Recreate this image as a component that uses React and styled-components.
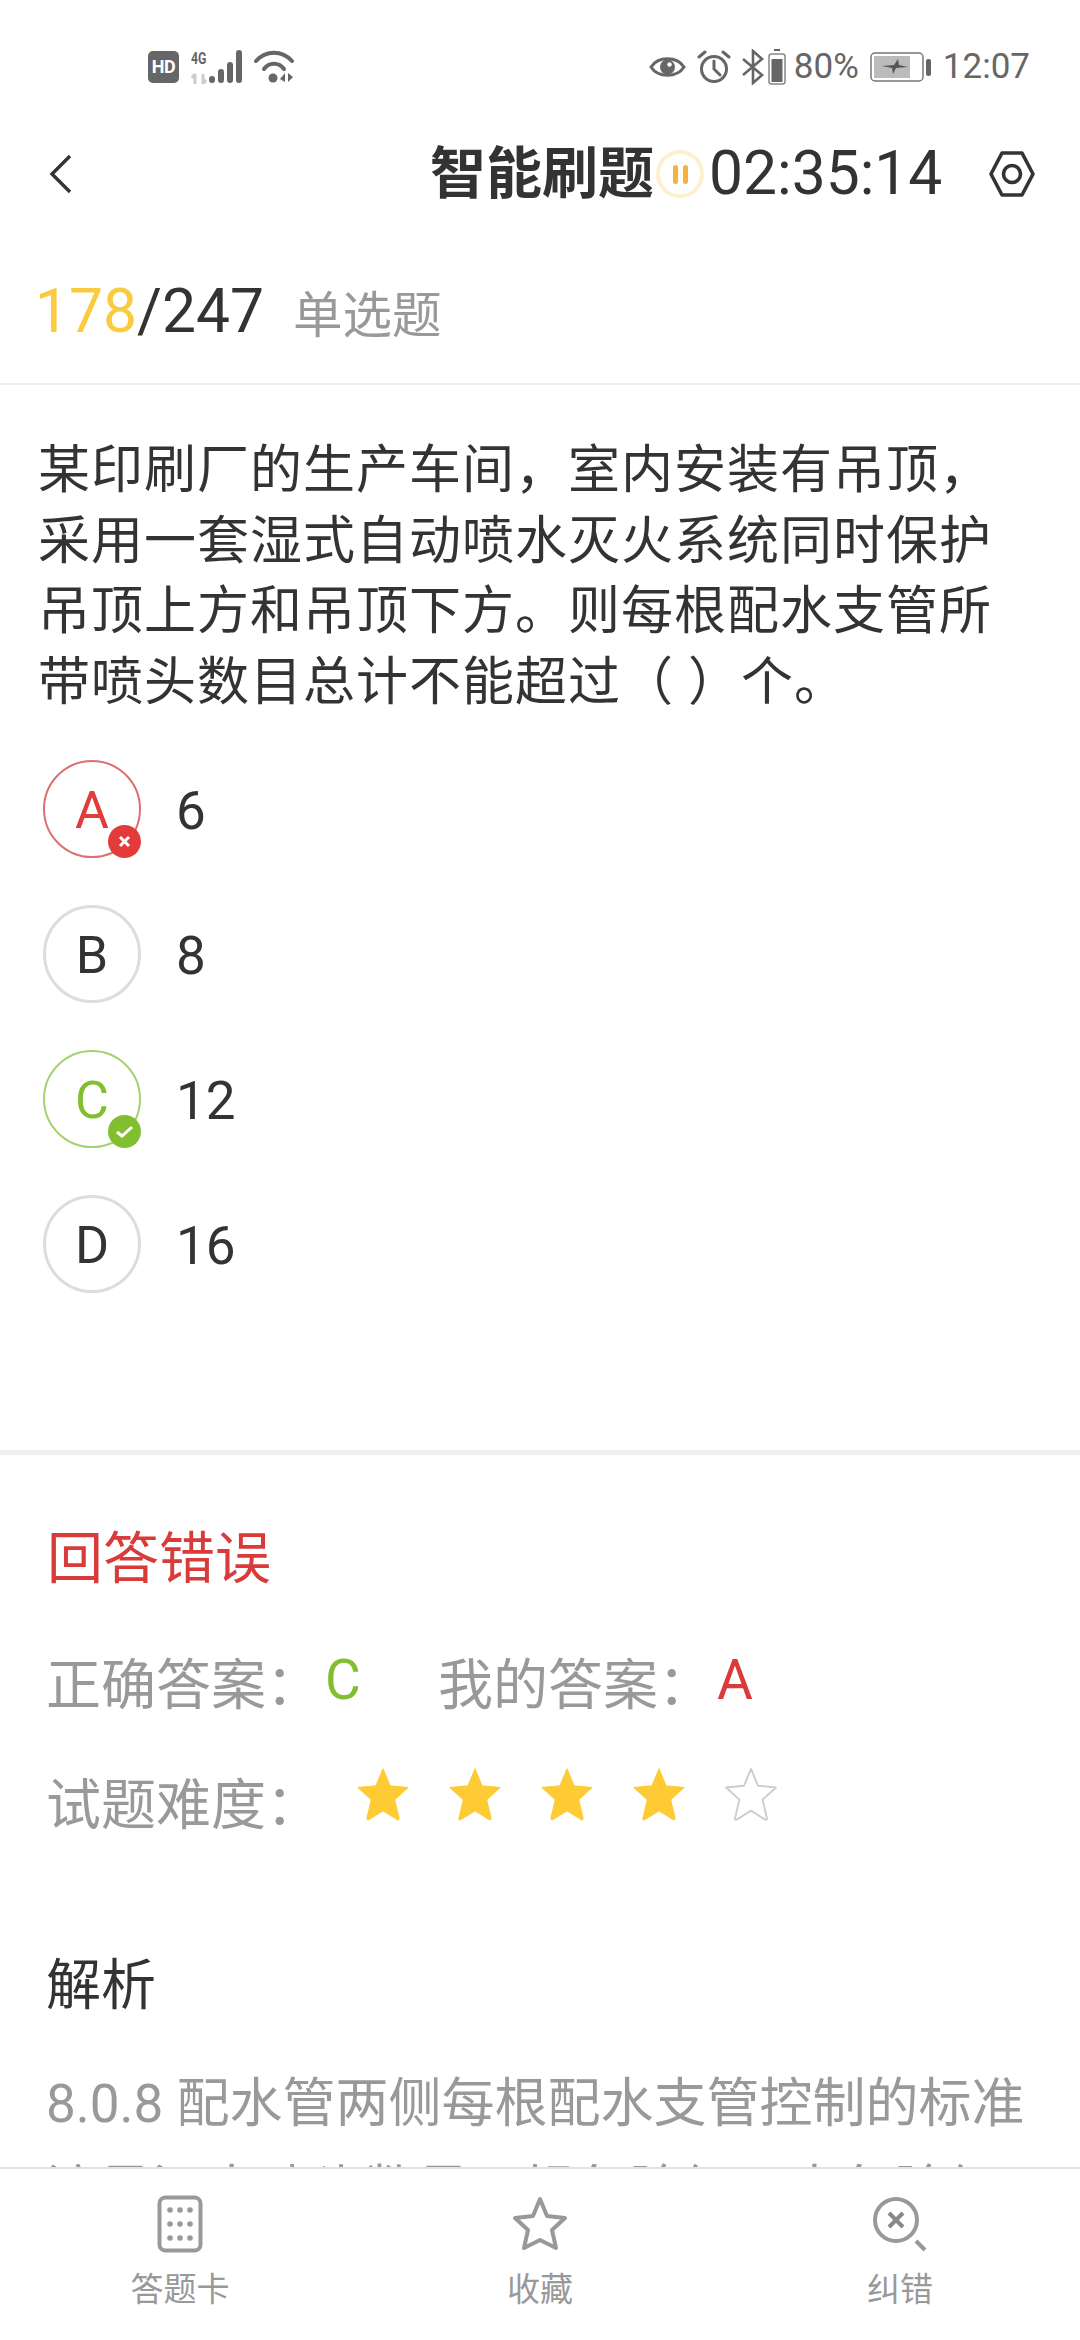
import React from "react";
import styled, { createGlobalStyle } from "styled-components";

const GlobalStyle = createGlobalStyle`
  html, body {
    margin: 0;
    padding: 0;
    background: #fff;
  }
  body {
    font-family: Roboto, "Noto Sans CJK SC", sans-serif;
  }
`;

const Page = styled.div`
  width: 1080px;
  height: 2340px;
  display: flex;
  flex-direction: column;
  overflow: hidden;
  background: #fff;
  color: #333;
`;

// Status bar
const StatusBar = styled.div`
  height: 134px;
  flex: none;
  display: flex;
  align-items: center;
  justify-content: space-between;
  padding: 0 50px 0 148px;
  box-sizing: border-box;
  color: #666;
`;

const StatusGroup = styled.div`
  display: flex;
  align-items: center;
`;

const StatusIcon = styled.svg`
  flex: none;
  margin-left: ${(p) => p.$left || 0}px;
`;

const HdBadge = styled.div`
  width: 31px;
  height: 32px;
  border-radius: 5px;
  background: #666;
  color: #fff;
  font: 700 18px/32px Roboto, sans-serif;
  text-align: center;
  letter-spacing: -0.5px;
`;

const SignalBox = styled.div`
  display: flex;
  flex-direction: column;
  width: 19px;
  margin-left: 12px;
`;

const SignalLabel = styled.span`
  font: 700 17px/15px Roboto, sans-serif;
  color: #666;
  transform: scaleX(0.72);
  transform-origin: left;
`;

const SignalArrows = styled.svg`
  margin-top: 7px;
`;

const StatusText = styled.span`
  font: 400 35px/40px Roboto, sans-serif;
  color: #666;
  margin-left: ${(p) => p.$left || 0}px;
`;

// Nav
const NavBar = styled.div`
  height: 80px;
  flex: none;
  display: flex;
  align-items: center;
  padding: 0 0 0 47px;
`;

const BackButton = styled.div`
  width: 26px;
  height: 44px;
  margin-right: 357px;
`;

const NavTitle = styled.div`
  font-size: 56px;
  font-weight: 700;
  line-height: 80px;
  color: #333;
  width: 224px;
  white-space: nowrap;
`;

const PauseButton = styled.div`
  width: 48px;
  height: 48px;
  box-sizing: border-box;
  border: 4px solid #fdf0cf;
  border-radius: 50%;
  display: flex;
  align-items: center;
  justify-content: center;
  gap: 5px;
  margin-left: 2px;
`;

const PauseBar = styled.span`
  width: 5px;
  height: 19px;
  border-radius: 3px;
  background: #f3b33d;
`;

const Timer = styled.div`
  font-size: 60.5px;
  font-weight: 400;
  line-height: 80px;
  color: #333;
  margin-left: 5px;
`;

const SettingsButton = styled.div`
  width: 48px;
  height: 50px;
  margin-left: 46px;
`;

// Header of question
const QuestionHead = styled.div`
  height: 171px;
  flex: none;
  box-sizing: border-box;
  padding: 26px 0 0 35px;
  border-bottom: 2px solid #eee;
  display: flex;
  align-items: center;
`;

const Count = styled.span`
  font-size: 60.5px;
  color: #333;
`;

const CountNow = styled.span`
  color: #fbcb3f;
`;

const QuestionType = styled.span`
  font-size: 49.5px;
  color: #999;
  margin-left: 29px;
`;

const Stem = styled.div`
  font-size: 52px;
  letter-spacing: 1px;
  line-height: 70.5px;
  color: #333;
  padding: 51px 60px 0 38px;
`;

const OptionList = styled.div`
  display: flex;
  flex-direction: column;
  gap: 47px;
  padding: 42px 0 0 43px;
`;

const OptionRow = styled.div`
  display: flex;
  align-items: center;
`;

const stateColor = { wrong: "#e33a3a", right: "#82bf30" };

const OptionCircle = styled.div`
  position: relative;
  width: 98px;
  height: 98px;
  box-sizing: border-box;
  padding-top: 2px;
  border-radius: 50%;
  border: ${(p) =>
    p.$state ? `2px solid ${p.$state === "wrong" ? "#dc7070" : "#a4d26e"}` : "3px solid #ddd"};
  display: flex;
  align-items: center;
  justify-content: center;
  font-size: 52px;
  color: ${(p) => stateColor[p.$state] || "#333"};
`;

const Badge = styled.span`
  position: absolute;
  right: -2px;
  bottom: -2px;
  width: 33px;
  height: 33px;
  border-radius: 50%;
  background: ${(p) => stateColor[p.$state]};
  display: flex;
  align-items: center;
  justify-content: center;
`;

const OptionText = styled.span`
  font-size: 53px;
  color: #333;
  margin-left: 35px;
  padding-top: 3px;
`;

const Divider = styled.div`
  height: 5px;
  flex: none;
  background: #eee;
  margin-top: 157px;
`;

// Result
const Result = styled.div`
  padding: 0 0 0 46px;
`;

const ResultTitle = styled.div`
  font-size: 56px;
  line-height: 80px;
  color: #d93a3a;
  margin: 64px 0 0 1px;
`;

const ResultRow = styled.div`
  display: flex;
  align-items: center;
  height: 80px;
  margin-top: ${(p) => p.$top || 0}px;
  font-size: 55px;
  color: #999;
`;

const RowLabel = styled.span`
  width: ${(p) => p.$width}px;
  white-space: nowrap;
`;

const AnswerLetter = styled.span`
  color: ${(p) => p.$color};
  width: ${(p) => p.$width}px;
`;

const Stars = styled.div`
  display: flex;
  gap: 34px;
  margin-left: 10px;
  margin-top: -11px;
`;

const StarIcon = styled.svg`
  display: block;
  flex: none;
`;

const SectionTitle = styled.div`
  font-size: 55px;
  line-height: 80px;
  color: #333;
  margin-top: 105px;
`;

const Analysis = styled.div`
  flex: 1;
  min-height: 0;
  overflow: hidden;
  font-size: 53px;
  line-height: 87px;
  color: #999;
  margin-top: 36px;
  padding: 0 36px 0 46px;
`;

// Tabs
const TabBar = styled.div`
  height: 173px;
  flex: none;
  box-sizing: border-box;
  border-top: 2px solid #e2e2e2;
  display: grid;
  grid-template-columns: 360px 360px 360px;
  background: #fff;
`;

const Tab = styled.div`
  display: flex;
  flex-direction: column;
  align-items: center;
  padding-top: 26px;
  color: #999;
  font-size: 33px;
  line-height: 40px;
`;

const TabIcon = styled.div`
  height: 58px;
  margin-bottom: 17px;
`;

function Star({ filled }) {
  const d = "M25 2.5 L31 17 L46.5 18.5 L35 29 L38.8 45 Q39 47 37 46 L25 38.5 L13 46 Q11 47 11.2 45 L15 29 L3.5 18.5 L19 17 Z";
  return (
    <StarIcon width="58" height="58" viewBox="0 0 50 50">
      <path
        d={d}
        fill={filled ? "#fecb35" : "#fff"}
        stroke={filled ? "#fecb35" : "#ccc"}
        strokeWidth={filled ? 1 : 1.6}
        strokeLinejoin="round"
      />
    </StarIcon>
  );
}

export default function App() {
  return (
    <Page>
      <GlobalStyle />
      <StatusBar>
        <StatusGroup>
          <HdBadge>HD</HdBadge>
          <SignalBox>
            <SignalLabel>4G</SignalLabel>
            <SignalArrows width="19" height="11" viewBox="0 0 19 11">
              <path d="M4 11V1M4 1L1 5M12 1V11L15 7" stroke="#ccc" strokeWidth="3" fill="none" />
            </SignalArrows>
          </SignalBox>
          <StatusIcon $left={-2} width="36" height="36" viewBox="0 0 36 36">
            <g stroke="#666" strokeWidth="6" strokeLinecap="round">
              <path d="M4 31v-1M13 31v-8M22 31v-15M31 31V4" />
            </g>
          </StatusIcon>
          <StatusIcon $left={10} width="40" height="36" viewBox="0 0 40 36">
            <g fill="none" stroke="#666" strokeWidth="4" strokeLinecap="round">
              <path d="M2 12C12 1 28 1 38 12" />
              <path d="M10 20C15 13 25 13 30 20" />
            </g>
            <circle cx="19" cy="29" r="4.5" fill="#666" />
            <path d="M31 24v9l-5-3zM34 24v9l5-5z" fill="#666" />
          </StatusIcon>
        </StatusGroup>
        <StatusGroup>
          <StatusIcon width="37" height="28" viewBox="0 0 37 28">
            <path d="M2 14C9 3 28 3 35 14C28 25 9 25 2 14Z" fill="none" stroke="#666" strokeWidth="3" />
            <circle cx="18.5" cy="14" r="7.5" fill="#666" />
            <circle cx="20.5" cy="11.5" r="2.2" fill="#fff" />
          </StatusIcon>
          <StatusIcon $left={11} width="34" height="34" viewBox="0 0 34 34">
            <circle cx="17" cy="19" r="12.5" fill="none" stroke="#666" strokeWidth="3" />
            <path d="M17 11v8l6 6M2 7l6-5M32 7l-6-5" fill="none" stroke="#666" strokeWidth="3" strokeLinecap="round" />
          </StatusIcon>
          <StatusIcon $left={11} width="24" height="36" viewBox="0 0 24 36">
            <path d="M1 10L20 26L11 34V2L20 10L1 26" fill="none" stroke="#666" strokeWidth="2.6" />
          </StatusIcon>
          <StatusIcon $left={2} width="18" height="36" viewBox="0 0 18 36">
            <path d="M6 1h6" stroke="#666" strokeWidth="2" />
            <rect x="1" y="5" width="16" height="30" rx="2.5" fill="none" stroke="#888" strokeWidth="1.5" />
            <rect x="3.5" y="10" width="11" height="23" fill="#666" />
          </StatusIcon>
          <StatusText $left={8}>80%</StatusText>
          <StatusIcon $left={11} width="62" height="30" viewBox="0 0 62 30">
            <rect x="1" y="1" width="52" height="28" rx="4" fill="#fff" stroke="#777" strokeWidth="1.5" />
            <rect x="4" y="4" width="36" height="22" fill="#bbb" />
            <path d="M12 14l12-1 4-6 1 6 9 2-12 1-3 6-1-6z" fill="#555" />
            <rect x="56" y="7" width="5" height="17" rx="2" fill="#666" />
          </StatusIcon>
          <StatusText $left={11}>12:07</StatusText>
        </StatusGroup>
      </StatusBar>

      <NavBar>
        <BackButton>
          <svg width="26" height="44" viewBox="0 0 26 44">
            <path d="M23 4L5 22L23 40" fill="none" stroke="#333" strokeWidth="3.4" />
          </svg>
        </BackButton>
        <NavTitle>智能刷题</NavTitle>
        <PauseButton>
          <PauseBar />
          <PauseBar />
        </PauseButton>
        <Timer>02:35:14</Timer>
        <SettingsButton>
          <svg width="48" height="50" viewBox="0 0 48 50">
            <path d="M14 4H34L45 25L34 46H14L3 25Z" fill="none" stroke="#333" strokeWidth="3.6" strokeLinejoin="round" />
            <circle cx="24" cy="25" r="8.5" fill="none" stroke="#333" strokeWidth="3.6" />
          </svg>
        </SettingsButton>
      </NavBar>

      <QuestionHead>
        <Count>
          <CountNow>178</CountNow>/247
        </Count>
        <QuestionType>单选题</QuestionType>
      </QuestionHead>

      <Stem>
        某印刷厂的生产车间，室内安装有吊顶，采用一套湿式自动喷水灭火系统同时保护吊顶上方和吊顶下方。则每根配水支管所带喷头数目总计不能超过（ ）个。
      </Stem>

      <OptionList>
        <OptionRow>
          <OptionCircle $state="wrong">
            A
            <Badge $state="wrong">
              <svg width="15" height="15" viewBox="0 0 15 15">
                <path d="M3 3L12 12M12 3L3 12" stroke="#fff" strokeWidth="3" />
              </svg>
            </Badge>
          </OptionCircle>
          <OptionText>6</OptionText>
        </OptionRow>
        <OptionRow>
          <OptionCircle>B</OptionCircle>
          <OptionText>8</OptionText>
        </OptionRow>
        <OptionRow>
          <OptionCircle $state="right">
            C
            <Badge $state="right">
              <svg width="19" height="15" viewBox="0 0 19 15">
                <path d="M2 8L7 12L17 3" fill="none" stroke="#fff" strokeWidth="3" />
              </svg>
            </Badge>
          </OptionCircle>
          <OptionText>12</OptionText>
        </OptionRow>
        <OptionRow>
          <OptionCircle>D</OptionCircle>
          <OptionText>16</OptionText>
        </OptionRow>
      </OptionList>

      <Divider />

      <Result>
        <ResultTitle>回答错误</ResultTitle>
        <ResultRow $top={41}>
          <RowLabel $width={279}>正确答案：</RowLabel>
          <AnswerLetter $color="#82bf30" $width={113}>C</AnswerLetter>
          <RowLabel $width={279}>我的答案：</RowLabel>
          <AnswerLetter $color="#d93a3a" $width={40}>A</AnswerLetter>
        </ResultRow>
        <ResultRow $top={40}>
          <RowLabel $width={298}>试题难度：</RowLabel>
          <Stars>
            <Star filled />
            <Star filled />
            <Star filled />
            <Star filled />
            <Star />
          </Stars>
        </ResultRow>
        <SectionTitle>解析</SectionTitle>
      </Result>

      <Analysis>
        8.0.8 配水管两侧每根配水支管控制的标准流量洒水喷头数量，轻危险级、中危险级
      </Analysis>

      <TabBar>
        <Tab>
          <TabIcon>
            <svg width="46" height="58" viewBox="0 0 46 58">
              <rect x="2.5" y="2.5" width="41" height="53" rx="6" fill="none" stroke="#999" strokeWidth="4" />
              {[15, 29, 43].map((y) =>
                [13, 23, 33].map((x) => <circle key={`${x}-${y}`} cx={x} cy={y} r="2.8" fill="#999" />)
              )}
            </svg>
          </TabIcon>
          答题卡
        </Tab>
        <Tab>
          <TabIcon>
            <svg width="58" height="58" viewBox="0 0 58 58">
              <path
                d="M29 4L36 21L54 23L41 35L45 53L29 45L13 53L17 35L4 23L22 21Z"
                fill="none"
                stroke="#999"
                strokeWidth="4"
                strokeLinejoin="round"
              />
            </svg>
          </TabIcon>
          收藏
        </Tab>
        <Tab>
          <TabIcon>
            <svg width="56" height="58" viewBox="0 0 56 58">
              <circle cx="24" cy="25" r="21" fill="none" stroke="#999" strokeWidth="4" />
              <path d="M17 18L31 32M31 18L17 32" stroke="#888" strokeWidth="4" />
              <path d="M44 46L53 55" stroke="#999" strokeWidth="4" />
            </svg>
          </TabIcon>
          纠错
        </Tab>
      </TabBar>
    </Page>
  );
}
